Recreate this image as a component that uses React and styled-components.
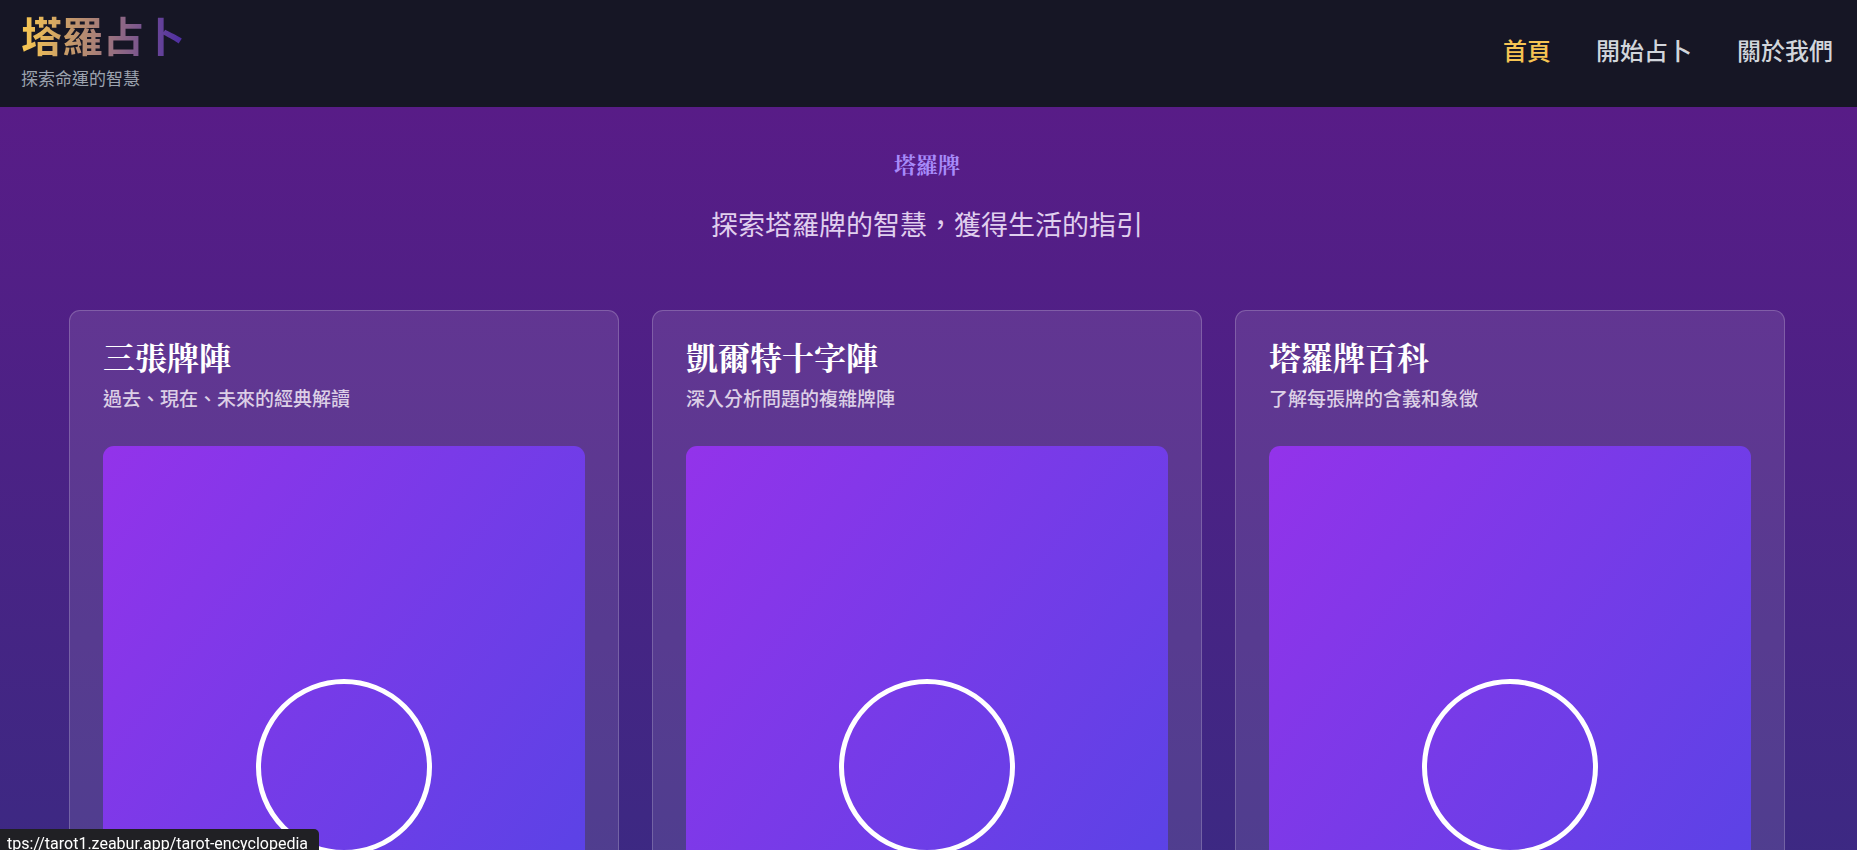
import React from 'react';
import styled, { createGlobalStyle } from 'styled-components';

const sans = '"Noto Sans CJK TC", sans-serif';
const serif = '"Liberation Serif", "Noto Serif CJK TC", "Noto Sans CJK TC", serif';

const GlobalStyle = createGlobalStyle`
  * {
    box-sizing: border-box;
  }

  html {
    scrollbar-width: none;
  }

  body {
    margin: 0;
    background: #312e81;
    font-family: ${sans};
    color: #fff;
  }
`;

const Header = styled.header`
  display: flex;
  justify-content: space-between;
  align-items: center;
  padding: 8px 24px 17px 21px;
  background: #161625;
`;

const Brand = styled.a`
  display: flex;
  flex-direction: column;
  gap: 5px;
  text-decoration: none;
`;

const BrandName = styled.span`
  font-size: 41px;
  font-weight: 700;
  line-height: 52px;
  color: transparent;
  background: linear-gradient(to right, #f9c851, #4a2aa5);
  background-clip: text;
`;

const Tagline = styled.span`
  font-size: 17px;
  line-height: 25px;
  color: #9ca3af;
`;

const Nav = styled.nav`
  display: flex;
  gap: 45px;
  padding-top: 2px;
`;

const NavLink = styled.a`
  font-size: 24px;
  font-weight: 500;
  line-height: 36px;
  text-decoration: none;
  color: ${(props) => (props.$active ? '#f6c453' : '#d1d5db')};
`;

const Main = styled.main`
  padding: 43px 72px 44px 69px;
  background: linear-gradient(to bottom, #581c87, #312e81);
`;

const Intro = styled.div`
  display: flex;
  flex-direction: column;
  align-items: center;
  gap: 22px;
  margin-bottom: 66px;
  text-align: center;
`;

const IntroTitle = styled.h1`
  margin: 0;
  font-family: ${serif};
  font-size: 22px;
  font-weight: 700;
  line-height: 32px;
  color: #a78bfa;
`;

const IntroText = styled.p`
  margin: 0;
  font-size: 27px;
  line-height: 40px;
  color: #e0cfee;
`;

const CardGrid = styled.div`
  display: grid;
  grid-template-columns: repeat(3, 1fr);
  gap: 33px;
`;

const Card = styled.a`
  display: flex;
  flex-direction: column;
  padding: 27px 33px 33px;
  border: 1px solid rgba(255, 255, 255, 0.2);
  border-radius: 11px;
  background: rgba(255, 255, 255, 0.1);
  color: inherit;
  text-decoration: none;
`;

const CardTitle = styled.h2`
  margin: 0;
  font-family: ${serif};
  font-size: 32px;
  font-weight: 700;
  line-height: 42px;
`;

const CardText = styled.p`
  margin: 3px 0 34px;
  font-size: 19px;
  font-weight: 500;
  line-height: 29px;
  color: #dccfe6;
`;

const CardArt = styled.div`
  display: flex;
  justify-content: center;
  align-items: center;
  aspect-ratio: 3 / 4;
  border-radius: 11px;
  background: linear-gradient(to bottom right, #9333ea, #4f46e5);
`;

const Ring = styled.svg`
  width: 176px;
  height: 176px;
`;

const StatusBar = styled.div`
  position: fixed;
  left: 0;
  bottom: 0;
  display: flex;
  justify-content: flex-end;
  width: 319px;
  height: 21px;
  padding: 4px 11px 0 0;
  border-radius: 0 5px 0 0;
  background: #202024;
  font-family: Roboto, sans-serif;
  font-size: 16px;
  line-height: 22px;
  white-space: nowrap;
`;

const navItems = [
  { label: '首頁', active: true },
  { label: '開始占卜' },
  { label: '關於我們' },
];

const cards = [
  { title: '三張牌陣', text: '過去、現在、未來的經典解讀' },
  { title: '凱爾特十字陣', text: '深入分析問題的複雜牌陣' },
  { title: '塔羅牌百科', text: '了解每張牌的含義和象徵' },
];

const App = () => {
  return (
    <div lang="zh-Hant">
      <GlobalStyle />
      <Header>
        <Brand href="#home">
          <BrandName>塔羅占卜</BrandName>
          <Tagline>探索命運的智慧</Tagline>
        </Brand>
        <Nav>
          {navItems.map((item) => (
            <NavLink key={item.label} href="#home" $active={item.active}>
              {item.label}
            </NavLink>
          ))}
        </Nav>
      </Header>
      <Main>
        <Intro>
          <IntroTitle>塔羅牌</IntroTitle>
          <IntroText>探索塔羅牌的智慧，獲得生活的指引</IntroText>
        </Intro>
        <CardGrid>
          {cards.map((card) => (
            <Card key={card.title} href="#cards">
              <CardTitle>{card.title}</CardTitle>
              <CardText>{card.text}</CardText>
              <CardArt>
                <Ring viewBox="0 0 176 176" fill="none" aria-hidden="true">
                  <circle cx="88" cy="88" r="85.5" stroke="#fff" strokeWidth="5" />
                </Ring>
              </CardArt>
            </Card>
          ))}
        </CardGrid>
      </Main>
      <StatusBar>tps://tarot1.zeabur.app/tarot-encyclopedia</StatusBar>
    </div>
  );
};

export default App;
